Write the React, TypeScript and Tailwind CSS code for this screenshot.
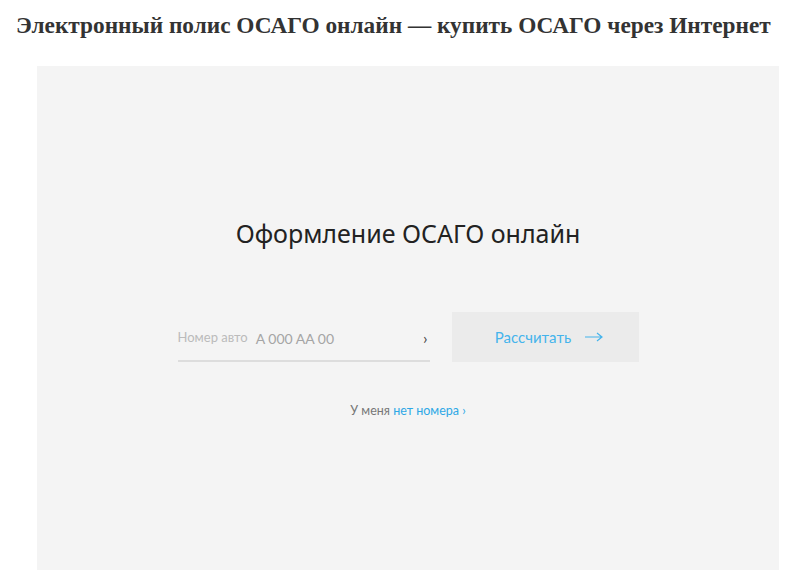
import React from "react";

export default function App() {
  return (
    <div className="w-[800px] h-[584px] bg-white overflow-hidden">
      <h1 className="pl-[16px] pt-[10px] text-[23.3px] leading-[30px] font-bold text-[#333333] whitespace-nowrap" style={{ fontFamily: '"Liberation Serif", serif' }}>
        Электронный полис ОСАГО онлайн — купить ОСАГО через Интернет
      </h1>
      <div className="ml-[37px] mt-[26px] w-[742px] h-[504px] bg-[#f4f4f4] flex flex-col items-center" style={{ fontFamily: 'Lato, "Open Sans", sans-serif' }}>
        <div className="mt-[150px] text-[25px] leading-[34px] text-[#222222]" style={{ fontFamily: '"Noto Sans", sans-serif' }}>Оформление ОСАГО онлайн</div>
        <div className="mt-[62px] flex items-end gap-[22px]">
          <div className="w-[252px] h-[50px] border-b-2 border-[#dddddd] flex items-center pt-[4px]">
            <span className="text-[13px] text-[#bbbbbb]">Номер авто</span>
            <span className="ml-[8px] text-[14px] text-[#a5a5a5]">A 000 AA 00</span>
            <span className="ml-auto mr-[2px] text-[16px] text-[#444444]">›</span>
          </div>
          <div className="w-[187px] h-[50px] bg-[#ebebeb] flex items-center justify-center gap-[14px] pl-[8px] text-[15px] text-[#45b4ec]">
            <span>Рассчитать</span>
            <svg width="18" height="10" viewBox="0 0 18 10" fill="none" stroke="#45b4ec" strokeWidth="1.2">
              <path d="M0 5h17M12 1l5 4-5 4" />
            </svg>
          </div>
        </div>
        <div className="mt-[40px] text-[12.5px] text-[#777777]">
          У меня <span className="text-[#2ea8e6]">нет номера ›</span>
        </div>
      </div>
    </div>
  );
}
